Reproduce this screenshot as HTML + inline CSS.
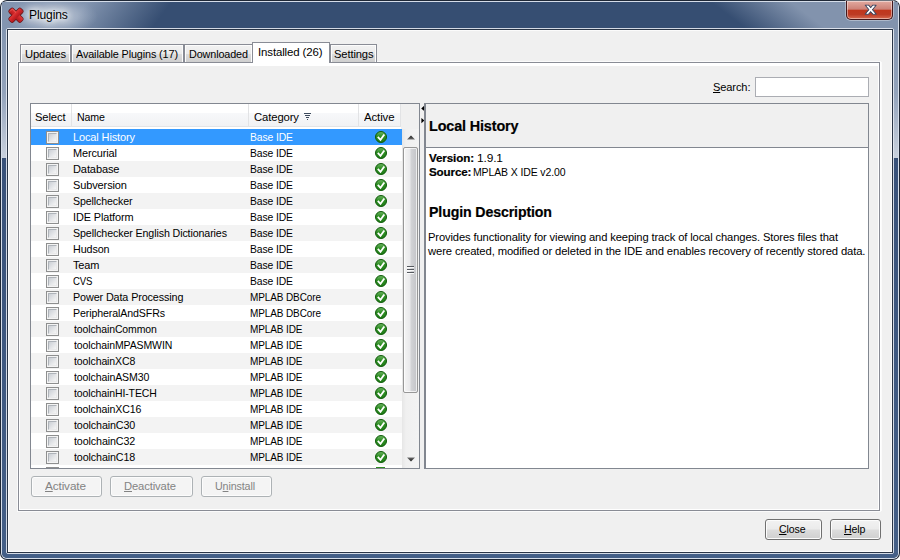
<!DOCTYPE html>
<html lang="en"><head><meta charset="utf-8"><title>Plugins</title>
<style>
html,body{margin:0;padding:0;}
body{width:900px;height:560px;overflow:hidden;position:relative;background:#fff;font-family:"Liberation Sans", "DejaVu Sans", sans-serif;font-size:11px;color:#000;}
.a{position:absolute;box-sizing:border-box;}
.t{position:absolute;white-space:nowrap;line-height:1;}
.b{font-weight:bold;font-family:"Liberation Sans", "DejaVu Sans", sans-serif;-webkit-text-stroke:0.2px #000;}
u{text-decoration:underline;text-underline-offset:1px;}
.btn{position:absolute;box-sizing:border-box;border:1px solid #707070;border-radius:3px;
 background:linear-gradient(#f2f2f2 0%,#ebebeb 48%,#dddddd 52%,#cfcfcf 100%);box-shadow:inset 0 0 0 1px #fcfcfc;}
.btn.dis{border-color:#adb2b5;background:#f4f4f4;box-shadow:inset 0 0 0 1px #fcfcfc;}
.tab{position:absolute;box-sizing:border-box;border:1px solid #898c95;border-bottom:none;
 background:linear-gradient(#f2f2f2 0%,#ebebeb 50%,#dddddd 52%,#cfcfcf 100%);box-shadow:inset 1px 1px 0 0 #fcfcfc, inset -1px 0 0 0 #fcfcfc;}
.cb{position:absolute;box-sizing:border-box;width:13px;height:13px;border:1px solid #8e8f8f;background:#f4f4f4;}
.cb i{position:absolute;left:1px;top:1px;width:9px;height:9px;box-sizing:border-box;border:1px solid #aeb3b9;border-right-color:#e9e9ea;border-bottom-color:#e9e9ea;background:linear-gradient(135deg,#cbcfd5 0%,#f6f6f6 100%);}
.hd{position:absolute;top:104px;height:23px;box-sizing:border-box;background:linear-gradient(#ffffff 0%,#ffffff 40%,#f7f8fa 42%,#f1f2f4 100%);border-bottom:1px solid #e3e4e6;border-right:1px solid #e2e3e5;}
</style></head><body>

<svg class="a" id="frame" style="left:0;top:0" width="900" height="560" viewBox="0 0 900 560"><defs><linearGradient id="gl" gradientUnits="userSpaceOnUse" x1="78" y1="15" x2="133" y2="55"><stop offset="0" stop-color="#8395b0"/><stop offset="1" stop-color="#8395b0" stop-opacity="0"/></linearGradient><linearGradient id="gr" gradientUnits="userSpaceOnUse" x1="728" y1="15" x2="757.5" y2="-23.6"><stop offset="0" stop-color="#8293ad" stop-opacity="0"/><stop offset="1" stop-color="#8293ad"/></linearGradient><linearGradient id="gs" gradientUnits="userSpaceOnUse" x1="0" y1="28" x2="0" y2="158"><stop offset="0" stop-color="#8395b0"/><stop offset=".5" stop-color="#93a3bb"/><stop offset="1" stop-color="#c9d1dd"/></linearGradient><linearGradient id="gd" gradientUnits="userSpaceOnUse" x1="0" y1="158" x2="0" y2="558"><stop offset="0" stop-color="#39527a"/><stop offset="1" stop-color="#445f87"/></linearGradient><radialGradient id="glow" gradientUnits="userSpaceOnUse" cx="52" cy="16" r="46" gradientTransform="translate(52 16) scale(1 .42) translate(-52 -16)"><stop offset="0" stop-color="#dfe5ee" stop-opacity=".75"/><stop offset=".55" stop-color="#c5cedb" stop-opacity=".45"/><stop offset="1" stop-color="#a9b5c8" stop-opacity="0"/></radialGradient><clipPath id="cpT"><rect x="2" y="2" width="896" height="27"/></clipPath></defs><rect x="0" y="0" width="900" height="560" rx="7" ry="7" fill="#1f2836"/><rect x="1" y="1" width="898" height="558" rx="6" ry="6" fill="#d5dde9"/><rect x="2" y="2" width="896" height="556" rx="5" ry="5" fill="#364e72"/><rect x="2" y="158" width="896" height="400" rx="5" ry="5" fill="url(#gd)"/><rect x="2" y="28" width="5" height="130" fill="url(#gs)"/><rect x="893" y="28" width="5" height="130" fill="url(#gs)"/><g clip-path="url(#cpT)"><rect x="2" y="2" width="896" height="27" rx="5" ry="5" fill="#364e72"/><rect x="2" y="2" width="400" height="27" fill="url(#gl)"/><rect x="500" y="2" width="398" height="27" fill="url(#gr)"/><rect x="2" y="2" width="200" height="27" fill="url(#glow)"/></g><rect x="6.5" y="28.5" width="887" height="525" rx="1.5" fill="none" stroke="#e4e9f1" stroke-opacity=".9"/><rect x="7.5" y="29.5" width="885" height="523" fill="none" stroke="#2a3546"/></svg>
<div class="a" id="client" style="left:8px;top:30px;width:884px;height:522px;background:#f0f0f0;box-shadow:inset 0 0 0 1px #fbfbfb;"></div>
<svg class="a" style="left:6px;top:5px" width="20" height="20" viewBox="0 0 20 20"><defs><linearGradient id="xg" x1="0" y1="0" x2="0" y2="1"><stop offset="0" stop-color="#e03a38"/><stop offset=".55" stop-color="#cc2226"/><stop offset="1" stop-color="#b01c1f"/></linearGradient></defs><g transform="translate(10 10.2)"><g stroke="#6a181b" stroke-width="1.5" fill="#6a181b" stroke-linejoin="round"><rect x="-8" y="-2.6" width="16" height="5.2" rx="1.4" transform="rotate(45)"/><rect x="-8" y="-2.6" width="16" height="5.2" rx="1.4" transform="rotate(-45)"/></g><g fill="url(#xg)"><rect x="-8" y="-2.6" width="16" height="5.2" rx="1.4" transform="rotate(45)"/><rect x="-8" y="-2.6" width="16" height="5.2" rx="1.4" transform="rotate(-45)"/></g><path d="M-6.2 -3.6 L-3.6 -6.2 L0 -2.6" fill="none" stroke="#f27a72" stroke-width="1" opacity=".6"/></g></svg>
<div class="a" style="left:846px;top:1px;width:47px;height:19px;border:1px solid #43171a;border-top:none;border-radius:0 0 5px 5px;background:linear-gradient(#e2aaa0 0%,#cd8176 46%,#c0361c 50%,#bd3b24 75%,#d66a50 100%);box-shadow:inset 0 0 0 1px rgba(255,255,255,.45),0 0 0 1px rgba(255,255,255,.35);"></div>
<svg class="a" style="left:864px;top:4px" width="14" height="12" viewBox="0 0 14 12"><path d="M1.3 1.2 H4.5 L6.7 3.7 L8.9 1.2 H12.1 L8.4 5.6 L12.1 10.2 H8.9 L6.7 7.6 L4.5 10.2 H1.3 L5 5.6 Z" fill="#fff" stroke="#3f4a63" stroke-width="1.1" stroke-linejoin="round"/><path d="M2.4 1.8 H4.2 L6.7 4.7 L9.2 1.8 H11 L7.6 5.7 L11 9.6 H9.2 L6.7 6.7 L4.2 9.6 H2.4 L5.8 5.7 Z" fill="#fff"/></svg>
<div class="a" style="left:18px;top:62px;width:862px;height:449px;border:1px solid #898c95;background:#f0f0f0;box-shadow:inset 0 0 0 1px #fff,0 0 0 1px rgba(255,255,255,.75),2px 0 0 0 rgba(255,255,255,.75);"></div>
<div class="a" style="left:19px;top:63px;width:860px;height:3px;background:#fff;"></div>
<div class="tab" style="left:20px;top:44px;width:51px;height:18px;"></div>
<div class="tab" style="left:71px;top:44px;width:113px;height:18px;"></div>
<div class="tab" style="left:184px;top:44px;width:69px;height:18px;"></div>
<div class="tab" style="left:330px;top:44px;width:47px;height:18px;"></div>
<div class="a" style="left:252px;top:42px;width:78px;height:21px;border:1px solid #898c95;border-bottom:none;background:#fff;"></div>
<div class="a" style="left:253px;top:62px;width:76px;height:2px;background:#fff;"></div>
<div class="a" style="left:755px;top:77px;width:114px;height:20px;border:1px solid #abadb3;border-top-color:#abadb3;background:#fff;"></div>
<div class="a" style="left:30px;top:103px;width:390px;height:366px;border:1px solid #828790;background:#fff;"></div>
<div class="hd" style="left:31px;width:41px;"></div>
<div class="hd" style="left:72px;width:177px;"></div>
<div class="hd" style="left:249px;width:110px;"></div>
<div class="hd" style="left:359px;width:42px;"></div>
<div class="a" style="left:401px;top:104px;width:18px;height:25px;background:#f0f0f0;"></div>
<svg class="a" style="left:304px;top:113px" width="7" height="8" viewBox="0 0 7 8"><path d="M0 .5H7M1 2.5H6M2 4.5H5M3 6.5H4" stroke="#3c4a5c" stroke-width="1" fill="none"/></svg>
<div class="a" style="left:31px;top:129px;width:371px;height:16px;background:#3399ff;"></div>
<div class="cb" style="left:46px;top:131px;"><i></i></div>
<svg class="a" style="left:375px;top:131px" width="12" height="12" viewBox="0 0 12 12"><defs><linearGradient id="g0" x1="0" y1="0" x2="0" y2="1"><stop offset="0" stop-color="#6db562"/><stop offset=".45" stop-color="#2f8f24"/><stop offset="1" stop-color="#1f7a16"/></linearGradient></defs><circle cx="6" cy="6" r="5.5" fill="url(#g0)" stroke="#0f5c0a" stroke-width="1"/><path d="M2.8 5.8 L5.5 8.8 L9.3 3.5" fill="none" stroke="#fff" stroke-width="1.8" stroke-linecap="butt" stroke-linejoin="miter"/></svg>
<div class="cb" style="left:46px;top:147px;"><i></i></div>
<svg class="a" style="left:375px;top:147px" width="12" height="12" viewBox="0 0 12 12"><defs><linearGradient id="g1" x1="0" y1="0" x2="0" y2="1"><stop offset="0" stop-color="#6db562"/><stop offset=".45" stop-color="#2f8f24"/><stop offset="1" stop-color="#1f7a16"/></linearGradient></defs><circle cx="6" cy="6" r="5.5" fill="url(#g1)" stroke="#0f5c0a" stroke-width="1"/><path d="M2.8 5.8 L5.5 8.8 L9.3 3.5" fill="none" stroke="#fff" stroke-width="1.8" stroke-linecap="butt" stroke-linejoin="miter"/></svg>
<div class="a" style="left:31px;top:161px;width:371px;height:16px;background:#f3f3f3;"></div>
<div class="cb" style="left:46px;top:163px;"><i></i></div>
<svg class="a" style="left:375px;top:163px" width="12" height="12" viewBox="0 0 12 12"><defs><linearGradient id="g2" x1="0" y1="0" x2="0" y2="1"><stop offset="0" stop-color="#6db562"/><stop offset=".45" stop-color="#2f8f24"/><stop offset="1" stop-color="#1f7a16"/></linearGradient></defs><circle cx="6" cy="6" r="5.5" fill="url(#g2)" stroke="#0f5c0a" stroke-width="1"/><path d="M2.8 5.8 L5.5 8.8 L9.3 3.5" fill="none" stroke="#fff" stroke-width="1.8" stroke-linecap="butt" stroke-linejoin="miter"/></svg>
<div class="cb" style="left:46px;top:179px;"><i></i></div>
<svg class="a" style="left:375px;top:179px" width="12" height="12" viewBox="0 0 12 12"><defs><linearGradient id="g3" x1="0" y1="0" x2="0" y2="1"><stop offset="0" stop-color="#6db562"/><stop offset=".45" stop-color="#2f8f24"/><stop offset="1" stop-color="#1f7a16"/></linearGradient></defs><circle cx="6" cy="6" r="5.5" fill="url(#g3)" stroke="#0f5c0a" stroke-width="1"/><path d="M2.8 5.8 L5.5 8.8 L9.3 3.5" fill="none" stroke="#fff" stroke-width="1.8" stroke-linecap="butt" stroke-linejoin="miter"/></svg>
<div class="a" style="left:31px;top:193px;width:371px;height:16px;background:#f3f3f3;"></div>
<div class="cb" style="left:46px;top:195px;"><i></i></div>
<svg class="a" style="left:375px;top:195px" width="12" height="12" viewBox="0 0 12 12"><defs><linearGradient id="g4" x1="0" y1="0" x2="0" y2="1"><stop offset="0" stop-color="#6db562"/><stop offset=".45" stop-color="#2f8f24"/><stop offset="1" stop-color="#1f7a16"/></linearGradient></defs><circle cx="6" cy="6" r="5.5" fill="url(#g4)" stroke="#0f5c0a" stroke-width="1"/><path d="M2.8 5.8 L5.5 8.8 L9.3 3.5" fill="none" stroke="#fff" stroke-width="1.8" stroke-linecap="butt" stroke-linejoin="miter"/></svg>
<div class="cb" style="left:46px;top:211px;"><i></i></div>
<svg class="a" style="left:375px;top:211px" width="12" height="12" viewBox="0 0 12 12"><defs><linearGradient id="g5" x1="0" y1="0" x2="0" y2="1"><stop offset="0" stop-color="#6db562"/><stop offset=".45" stop-color="#2f8f24"/><stop offset="1" stop-color="#1f7a16"/></linearGradient></defs><circle cx="6" cy="6" r="5.5" fill="url(#g5)" stroke="#0f5c0a" stroke-width="1"/><path d="M2.8 5.8 L5.5 8.8 L9.3 3.5" fill="none" stroke="#fff" stroke-width="1.8" stroke-linecap="butt" stroke-linejoin="miter"/></svg>
<div class="a" style="left:31px;top:225px;width:371px;height:16px;background:#f3f3f3;"></div>
<div class="cb" style="left:46px;top:227px;"><i></i></div>
<svg class="a" style="left:375px;top:227px" width="12" height="12" viewBox="0 0 12 12"><defs><linearGradient id="g6" x1="0" y1="0" x2="0" y2="1"><stop offset="0" stop-color="#6db562"/><stop offset=".45" stop-color="#2f8f24"/><stop offset="1" stop-color="#1f7a16"/></linearGradient></defs><circle cx="6" cy="6" r="5.5" fill="url(#g6)" stroke="#0f5c0a" stroke-width="1"/><path d="M2.8 5.8 L5.5 8.8 L9.3 3.5" fill="none" stroke="#fff" stroke-width="1.8" stroke-linecap="butt" stroke-linejoin="miter"/></svg>
<div class="cb" style="left:46px;top:243px;"><i></i></div>
<svg class="a" style="left:375px;top:243px" width="12" height="12" viewBox="0 0 12 12"><defs><linearGradient id="g7" x1="0" y1="0" x2="0" y2="1"><stop offset="0" stop-color="#6db562"/><stop offset=".45" stop-color="#2f8f24"/><stop offset="1" stop-color="#1f7a16"/></linearGradient></defs><circle cx="6" cy="6" r="5.5" fill="url(#g7)" stroke="#0f5c0a" stroke-width="1"/><path d="M2.8 5.8 L5.5 8.8 L9.3 3.5" fill="none" stroke="#fff" stroke-width="1.8" stroke-linecap="butt" stroke-linejoin="miter"/></svg>
<div class="a" style="left:31px;top:257px;width:371px;height:16px;background:#f3f3f3;"></div>
<div class="cb" style="left:46px;top:259px;"><i></i></div>
<svg class="a" style="left:375px;top:259px" width="12" height="12" viewBox="0 0 12 12"><defs><linearGradient id="g8" x1="0" y1="0" x2="0" y2="1"><stop offset="0" stop-color="#6db562"/><stop offset=".45" stop-color="#2f8f24"/><stop offset="1" stop-color="#1f7a16"/></linearGradient></defs><circle cx="6" cy="6" r="5.5" fill="url(#g8)" stroke="#0f5c0a" stroke-width="1"/><path d="M2.8 5.8 L5.5 8.8 L9.3 3.5" fill="none" stroke="#fff" stroke-width="1.8" stroke-linecap="butt" stroke-linejoin="miter"/></svg>
<div class="cb" style="left:46px;top:275px;"><i></i></div>
<svg class="a" style="left:375px;top:275px" width="12" height="12" viewBox="0 0 12 12"><defs><linearGradient id="g9" x1="0" y1="0" x2="0" y2="1"><stop offset="0" stop-color="#6db562"/><stop offset=".45" stop-color="#2f8f24"/><stop offset="1" stop-color="#1f7a16"/></linearGradient></defs><circle cx="6" cy="6" r="5.5" fill="url(#g9)" stroke="#0f5c0a" stroke-width="1"/><path d="M2.8 5.8 L5.5 8.8 L9.3 3.5" fill="none" stroke="#fff" stroke-width="1.8" stroke-linecap="butt" stroke-linejoin="miter"/></svg>
<div class="a" style="left:31px;top:289px;width:371px;height:16px;background:#f3f3f3;"></div>
<div class="cb" style="left:46px;top:291px;"><i></i></div>
<svg class="a" style="left:375px;top:291px" width="12" height="12" viewBox="0 0 12 12"><defs><linearGradient id="g10" x1="0" y1="0" x2="0" y2="1"><stop offset="0" stop-color="#6db562"/><stop offset=".45" stop-color="#2f8f24"/><stop offset="1" stop-color="#1f7a16"/></linearGradient></defs><circle cx="6" cy="6" r="5.5" fill="url(#g10)" stroke="#0f5c0a" stroke-width="1"/><path d="M2.8 5.8 L5.5 8.8 L9.3 3.5" fill="none" stroke="#fff" stroke-width="1.8" stroke-linecap="butt" stroke-linejoin="miter"/></svg>
<div class="cb" style="left:46px;top:307px;"><i></i></div>
<svg class="a" style="left:375px;top:307px" width="12" height="12" viewBox="0 0 12 12"><defs><linearGradient id="g11" x1="0" y1="0" x2="0" y2="1"><stop offset="0" stop-color="#6db562"/><stop offset=".45" stop-color="#2f8f24"/><stop offset="1" stop-color="#1f7a16"/></linearGradient></defs><circle cx="6" cy="6" r="5.5" fill="url(#g11)" stroke="#0f5c0a" stroke-width="1"/><path d="M2.8 5.8 L5.5 8.8 L9.3 3.5" fill="none" stroke="#fff" stroke-width="1.8" stroke-linecap="butt" stroke-linejoin="miter"/></svg>
<div class="a" style="left:31px;top:321px;width:371px;height:16px;background:#f3f3f3;"></div>
<div class="cb" style="left:46px;top:323px;"><i></i></div>
<svg class="a" style="left:375px;top:323px" width="12" height="12" viewBox="0 0 12 12"><defs><linearGradient id="g12" x1="0" y1="0" x2="0" y2="1"><stop offset="0" stop-color="#6db562"/><stop offset=".45" stop-color="#2f8f24"/><stop offset="1" stop-color="#1f7a16"/></linearGradient></defs><circle cx="6" cy="6" r="5.5" fill="url(#g12)" stroke="#0f5c0a" stroke-width="1"/><path d="M2.8 5.8 L5.5 8.8 L9.3 3.5" fill="none" stroke="#fff" stroke-width="1.8" stroke-linecap="butt" stroke-linejoin="miter"/></svg>
<div class="cb" style="left:46px;top:339px;"><i></i></div>
<svg class="a" style="left:375px;top:339px" width="12" height="12" viewBox="0 0 12 12"><defs><linearGradient id="g13" x1="0" y1="0" x2="0" y2="1"><stop offset="0" stop-color="#6db562"/><stop offset=".45" stop-color="#2f8f24"/><stop offset="1" stop-color="#1f7a16"/></linearGradient></defs><circle cx="6" cy="6" r="5.5" fill="url(#g13)" stroke="#0f5c0a" stroke-width="1"/><path d="M2.8 5.8 L5.5 8.8 L9.3 3.5" fill="none" stroke="#fff" stroke-width="1.8" stroke-linecap="butt" stroke-linejoin="miter"/></svg>
<div class="a" style="left:31px;top:353px;width:371px;height:16px;background:#f3f3f3;"></div>
<div class="cb" style="left:46px;top:355px;"><i></i></div>
<svg class="a" style="left:375px;top:355px" width="12" height="12" viewBox="0 0 12 12"><defs><linearGradient id="g14" x1="0" y1="0" x2="0" y2="1"><stop offset="0" stop-color="#6db562"/><stop offset=".45" stop-color="#2f8f24"/><stop offset="1" stop-color="#1f7a16"/></linearGradient></defs><circle cx="6" cy="6" r="5.5" fill="url(#g14)" stroke="#0f5c0a" stroke-width="1"/><path d="M2.8 5.8 L5.5 8.8 L9.3 3.5" fill="none" stroke="#fff" stroke-width="1.8" stroke-linecap="butt" stroke-linejoin="miter"/></svg>
<div class="cb" style="left:46px;top:371px;"><i></i></div>
<svg class="a" style="left:375px;top:371px" width="12" height="12" viewBox="0 0 12 12"><defs><linearGradient id="g15" x1="0" y1="0" x2="0" y2="1"><stop offset="0" stop-color="#6db562"/><stop offset=".45" stop-color="#2f8f24"/><stop offset="1" stop-color="#1f7a16"/></linearGradient></defs><circle cx="6" cy="6" r="5.5" fill="url(#g15)" stroke="#0f5c0a" stroke-width="1"/><path d="M2.8 5.8 L5.5 8.8 L9.3 3.5" fill="none" stroke="#fff" stroke-width="1.8" stroke-linecap="butt" stroke-linejoin="miter"/></svg>
<div class="a" style="left:31px;top:385px;width:371px;height:16px;background:#f3f3f3;"></div>
<div class="cb" style="left:46px;top:387px;"><i></i></div>
<svg class="a" style="left:375px;top:387px" width="12" height="12" viewBox="0 0 12 12"><defs><linearGradient id="g16" x1="0" y1="0" x2="0" y2="1"><stop offset="0" stop-color="#6db562"/><stop offset=".45" stop-color="#2f8f24"/><stop offset="1" stop-color="#1f7a16"/></linearGradient></defs><circle cx="6" cy="6" r="5.5" fill="url(#g16)" stroke="#0f5c0a" stroke-width="1"/><path d="M2.8 5.8 L5.5 8.8 L9.3 3.5" fill="none" stroke="#fff" stroke-width="1.8" stroke-linecap="butt" stroke-linejoin="miter"/></svg>
<div class="cb" style="left:46px;top:403px;"><i></i></div>
<svg class="a" style="left:375px;top:403px" width="12" height="12" viewBox="0 0 12 12"><defs><linearGradient id="g17" x1="0" y1="0" x2="0" y2="1"><stop offset="0" stop-color="#6db562"/><stop offset=".45" stop-color="#2f8f24"/><stop offset="1" stop-color="#1f7a16"/></linearGradient></defs><circle cx="6" cy="6" r="5.5" fill="url(#g17)" stroke="#0f5c0a" stroke-width="1"/><path d="M2.8 5.8 L5.5 8.8 L9.3 3.5" fill="none" stroke="#fff" stroke-width="1.8" stroke-linecap="butt" stroke-linejoin="miter"/></svg>
<div class="a" style="left:31px;top:417px;width:371px;height:16px;background:#f3f3f3;"></div>
<div class="cb" style="left:46px;top:419px;"><i></i></div>
<svg class="a" style="left:375px;top:419px" width="12" height="12" viewBox="0 0 12 12"><defs><linearGradient id="g18" x1="0" y1="0" x2="0" y2="1"><stop offset="0" stop-color="#6db562"/><stop offset=".45" stop-color="#2f8f24"/><stop offset="1" stop-color="#1f7a16"/></linearGradient></defs><circle cx="6" cy="6" r="5.5" fill="url(#g18)" stroke="#0f5c0a" stroke-width="1"/><path d="M2.8 5.8 L5.5 8.8 L9.3 3.5" fill="none" stroke="#fff" stroke-width="1.8" stroke-linecap="butt" stroke-linejoin="miter"/></svg>
<div class="cb" style="left:46px;top:435px;"><i></i></div>
<svg class="a" style="left:375px;top:435px" width="12" height="12" viewBox="0 0 12 12"><defs><linearGradient id="g19" x1="0" y1="0" x2="0" y2="1"><stop offset="0" stop-color="#6db562"/><stop offset=".45" stop-color="#2f8f24"/><stop offset="1" stop-color="#1f7a16"/></linearGradient></defs><circle cx="6" cy="6" r="5.5" fill="url(#g19)" stroke="#0f5c0a" stroke-width="1"/><path d="M2.8 5.8 L5.5 8.8 L9.3 3.5" fill="none" stroke="#fff" stroke-width="1.8" stroke-linecap="butt" stroke-linejoin="miter"/></svg>
<div class="a" style="left:31px;top:449px;width:371px;height:16px;background:#f3f3f3;"></div>
<div class="cb" style="left:46px;top:451px;"><i></i></div>
<svg class="a" style="left:375px;top:451px" width="12" height="12" viewBox="0 0 12 12"><defs><linearGradient id="g20" x1="0" y1="0" x2="0" y2="1"><stop offset="0" stop-color="#6db562"/><stop offset=".45" stop-color="#2f8f24"/><stop offset="1" stop-color="#1f7a16"/></linearGradient></defs><circle cx="6" cy="6" r="5.5" fill="url(#g20)" stroke="#0f5c0a" stroke-width="1"/><path d="M2.8 5.8 L5.5 8.8 L9.3 3.5" fill="none" stroke="#fff" stroke-width="1.8" stroke-linecap="butt" stroke-linejoin="miter"/></svg>
<div class="a" style="left:46px;top:467px;width:13px;height:1px;background:#8e8f8f;"></div>
<div class="a" style="left:376px;top:467px;width:9px;height:1px;background:#2f8a22;"></div>
<div class="a" style="left:402px;top:129px;width:17px;height:339px;background:linear-gradient(90deg,#e6e6e6 0,#f0f0f0 4px,#f3f3f3 100%);"></div>
<div class="a" style="left:403px;top:147px;width:15px;height:246px;border:1px solid #979797;border-radius:2px;background:linear-gradient(90deg,#f5f5f5 0%,#e9e9eb 45%,#d2d3d6 55%,#c3c4c8 100%);box-shadow:inset 0 0 0 1px rgba(255,255,255,.7);"></div>
<svg class="a" style="left:407px;top:266px" width="7" height="8" viewBox="0 0 7 8"><path d="M0 .5H7M0 3.5H7M0 6.5H7" stroke="#55595f" stroke-width="1"/><path d="M0 1.5H7M0 4.5H7M0 7.5H7" stroke="#fff" stroke-width="1" opacity=".85"/></svg>
<svg class="a" style="left:407px;top:135px" width="8" height="5" viewBox="0 0 8 5"><defs><linearGradient id="ua" x1="0" y1="0" x2="0" y2="1"><stop offset="0" stop-color="#1a1a1a"/><stop offset="1" stop-color="#6e6e6e"/></linearGradient></defs><path d="M0 4.5 L4 .5 L8 4.5 Z" fill="url(#ua)"/></svg>
<svg class="a" style="left:407px;top:457px" width="8" height="5" viewBox="0 0 8 5"><defs><linearGradient id="da" x1="0" y1="0" x2="0" y2="1"><stop offset="0" stop-color="#6e6e6e"/><stop offset="1" stop-color="#1a1a1a"/></linearGradient></defs><path d="M0 .5 L4 4.5 L8 .5 Z" fill="url(#da)"/></svg>
<svg class="a" style="left:420px;top:104px" width="5" height="22" viewBox="0 0 5 22"><path d="M4.2 1.8 L4.2 7 L1.2 4.4 Z M1.4 14 L1.4 19.2 L4.4 16.6 Z" fill="#000"/></svg>
<div class="a" style="left:424px;top:103px;width:445px;height:366px;border:1px solid #828790;border-left:2px solid #828790;background:#fff;"></div>
<div class="a" style="left:426px;top:104px;width:442px;height:43px;background:#f0f0f0;border-bottom:1px solid #828790;box-sizing:content-box;"></div>
<div class="btn dis" style="left:31px;top:476px;width:71px;height:21px;"></div>
<div class="btn dis" style="left:110px;top:476px;width:83px;height:21px;"></div>
<div class="btn dis" style="left:201px;top:476px;width:71px;height:21px;"></div>
<div class="btn" style="left:765px;top:519px;width:57px;height:21px;"></div>
<div class="btn" style="left:830px;top:519px;width:51px;height:21px;"></div>
<span class="t" id="title" style="left:28.60px;top:8.84px;font-size:12px;color:#000;letter-spacing:-0.120px;transform:scaleX(1.0067);transform-origin:0 0;text-shadow:0 0 6px #fff,0 0 8px #fff,0 0 10px rgba(255,255,255,.9);">Plugins</span>
<span class="t" id="tab_Updates" style="left:24.50px;top:48.69px;font-size:11px;color:#000;letter-spacing:-0.120px;transform:scaleX(1.0183);transform-origin:0 0;">Updates</span>
<span class="t" id="tab_Available" style="left:76.00px;top:48.69px;font-size:11px;color:#000;letter-spacing:-0.120px;transform:scaleX(0.9838);transform-origin:0 0;">Available Plugins (17)</span>
<span class="t" id="tab_Downloaded" style="left:188.50px;top:48.69px;font-size:11px;color:#000;letter-spacing:-0.120px;transform:scaleX(0.9821);transform-origin:0 0;">Downloaded</span>
<span class="t" id="tab_Settings" style="left:333.50px;top:48.69px;font-size:11px;color:#000;letter-spacing:-0.120px;transform:scaleX(1.0152);transform-origin:0 0;">Settings</span>
<span class="t" id="tab_Installed" style="left:257.50px;top:46.69px;font-size:11px;color:#000;letter-spacing:-0.120px;transform:scaleX(1.0398);transform-origin:0 0;">Installed (26)</span>
<span class="t" id="search" style="left:713.40px;top:81.69px;font-size:11px;color:#000;letter-spacing:-0.120px;transform:scaleX(1.0080);transform-origin:0 0;"><u>S</u>earch:</span>
<span class="t" id="h_select" style="left:34.50px;top:111.69px;font-size:11px;color:#000;letter-spacing:-0.120px;transform:scaleX(1.0174);transform-origin:0 0;">Select</span>
<span class="t" id="h_name" style="left:77.20px;top:111.69px;font-size:11px;color:#000;letter-spacing:-0.120px;transform:scaleX(0.9661);transform-origin:0 0;">Name</span>
<span class="t" id="h_cat" style="left:253.50px;top:111.69px;font-size:11px;color:#000;letter-spacing:-0.120px;transform:scaleX(1.0274);transform-origin:0 0;">Category</span>
<span class="t" id="h_active" style="left:363.50px;top:111.69px;font-size:11px;color:#000;letter-spacing:-0.120px;transform:scaleX(1.0385);transform-origin:0 0;">Active</span>
<span class="t" id="n0" style="left:72.60px;top:131.69px;font-size:11px;color:#fff;letter-spacing:-0.120px;transform:scaleX(0.9978);transform-origin:0 0;">Local History</span>
<span class="t" id="c0" style="left:249.70px;top:131.69px;font-size:11px;color:#fff;letter-spacing:-0.120px;transform:scaleX(0.9424);transform-origin:0 0;">Base IDE</span>
<span class="t" id="n1" style="left:72.60px;top:147.69px;font-size:11px;color:#000;letter-spacing:-0.120px;transform:scaleX(0.9938);transform-origin:0 0;">Mercurial</span>
<span class="t" id="c1" style="left:249.70px;top:147.69px;font-size:11px;color:#000;letter-spacing:-0.120px;transform:scaleX(0.9424);transform-origin:0 0;">Base IDE</span>
<span class="t" id="n2" style="left:72.60px;top:163.69px;font-size:11px;color:#000;letter-spacing:-0.120px;transform:scaleX(1.0053);transform-origin:0 0;">Database</span>
<span class="t" id="c2" style="left:249.70px;top:163.69px;font-size:11px;color:#000;letter-spacing:-0.120px;transform:scaleX(0.9424);transform-origin:0 0;">Base IDE</span>
<span class="t" id="n3" style="left:72.60px;top:179.69px;font-size:11px;color:#000;letter-spacing:-0.120px;transform:scaleX(1.0006);transform-origin:0 0;">Subversion</span>
<span class="t" id="c3" style="left:249.70px;top:179.69px;font-size:11px;color:#000;letter-spacing:-0.120px;transform:scaleX(0.9424);transform-origin:0 0;">Base IDE</span>
<span class="t" id="n4" style="left:72.60px;top:195.69px;font-size:11px;color:#000;letter-spacing:-0.120px;transform:scaleX(0.9649);transform-origin:0 0;">Spellchecker</span>
<span class="t" id="c4" style="left:249.70px;top:195.69px;font-size:11px;color:#000;letter-spacing:-0.120px;transform:scaleX(0.9424);transform-origin:0 0;">Base IDE</span>
<span class="t" id="n5" style="left:72.60px;top:211.69px;font-size:11px;color:#000;letter-spacing:-0.120px;transform:scaleX(0.9912);transform-origin:0 0;">IDE Platform</span>
<span class="t" id="c5" style="left:249.70px;top:211.69px;font-size:11px;color:#000;letter-spacing:-0.120px;transform:scaleX(0.9424);transform-origin:0 0;">Base IDE</span>
<span class="t" id="n6" style="left:72.60px;top:227.69px;font-size:11px;color:#000;letter-spacing:-0.120px;transform:scaleX(0.9698);transform-origin:0 0;">Spellchecker English Dictionaries</span>
<span class="t" id="c6" style="left:249.70px;top:227.69px;font-size:11px;color:#000;letter-spacing:-0.120px;transform:scaleX(0.9424);transform-origin:0 0;">Base IDE</span>
<span class="t" id="n7" style="left:72.60px;top:243.69px;font-size:11px;color:#000;letter-spacing:-0.120px;transform:scaleX(0.9780);transform-origin:0 0;">Hudson</span>
<span class="t" id="c7" style="left:249.70px;top:243.69px;font-size:11px;color:#000;letter-spacing:-0.120px;transform:scaleX(0.9424);transform-origin:0 0;">Base IDE</span>
<span class="t" id="n8" style="left:72.60px;top:259.69px;font-size:11px;color:#000;letter-spacing:-0.120px;transform:scaleX(0.9983);transform-origin:0 0;">Team</span>
<span class="t" id="c8" style="left:249.70px;top:259.69px;font-size:11px;color:#000;letter-spacing:-0.120px;transform:scaleX(0.9424);transform-origin:0 0;">Base IDE</span>
<span class="t" id="n9" style="left:72.60px;top:275.69px;font-size:11px;color:#000;letter-spacing:-0.120px;transform:scaleX(0.8711);transform-origin:0 0;">CVS</span>
<span class="t" id="c9" style="left:249.70px;top:275.69px;font-size:11px;color:#000;letter-spacing:-0.120px;transform:scaleX(0.9424);transform-origin:0 0;">Base IDE</span>
<span class="t" id="n10" style="left:72.60px;top:291.69px;font-size:11px;color:#000;letter-spacing:-0.120px;transform:scaleX(0.9818);transform-origin:0 0;">Power Data Processing</span>
<span class="t" id="c10" style="left:249.70px;top:291.69px;font-size:11px;color:#000;letter-spacing:-0.120px;transform:scaleX(0.9083);transform-origin:0 0;">MPLAB DBCore</span>
<span class="t" id="n11" style="left:72.60px;top:307.69px;font-size:11px;color:#000;letter-spacing:-0.120px;transform:scaleX(0.9654);transform-origin:0 0;">PeripheralAndSFRs</span>
<span class="t" id="c11" style="left:249.70px;top:307.69px;font-size:11px;color:#000;letter-spacing:-0.120px;transform:scaleX(0.9083);transform-origin:0 0;">MPLAB DBCore</span>
<span class="t" id="n12" style="left:73.80px;top:323.69px;font-size:11px;color:#000;letter-spacing:-0.120px;transform:scaleX(0.9520);transform-origin:0 0;">toolchainCommon</span>
<span class="t" id="c12" style="left:249.70px;top:323.69px;font-size:11px;color:#000;letter-spacing:-0.120px;transform:scaleX(0.9094);transform-origin:0 0;">MPLAB IDE</span>
<span class="t" id="n13" style="left:73.80px;top:339.69px;font-size:11px;color:#000;letter-spacing:-0.120px;transform:scaleX(0.9542);transform-origin:0 0;">toolchainMPASMWIN</span>
<span class="t" id="c13" style="left:249.70px;top:339.69px;font-size:11px;color:#000;letter-spacing:-0.120px;transform:scaleX(0.9094);transform-origin:0 0;">MPLAB IDE</span>
<span class="t" id="n14" style="left:73.80px;top:355.69px;font-size:11px;color:#000;letter-spacing:-0.120px;transform:scaleX(0.9561);transform-origin:0 0;">toolchainXC8</span>
<span class="t" id="c14" style="left:249.70px;top:355.69px;font-size:11px;color:#000;letter-spacing:-0.120px;transform:scaleX(0.9094);transform-origin:0 0;">MPLAB IDE</span>
<span class="t" id="n15" style="left:73.80px;top:371.69px;font-size:11px;color:#000;letter-spacing:-0.120px;transform:scaleX(0.9586);transform-origin:0 0;">toolchainASM30</span>
<span class="t" id="c15" style="left:249.70px;top:371.69px;font-size:11px;color:#000;letter-spacing:-0.120px;transform:scaleX(0.9094);transform-origin:0 0;">MPLAB IDE</span>
<span class="t" id="n16" style="left:73.80px;top:387.69px;font-size:11px;color:#000;letter-spacing:-0.120px;transform:scaleX(0.9535);transform-origin:0 0;">toolchainHI-TECH</span>
<span class="t" id="c16" style="left:249.70px;top:387.69px;font-size:11px;color:#000;letter-spacing:-0.120px;transform:scaleX(0.9094);transform-origin:0 0;">MPLAB IDE</span>
<span class="t" id="n17" style="left:73.80px;top:403.69px;font-size:11px;color:#000;letter-spacing:-0.120px;transform:scaleX(0.9597);transform-origin:0 0;">toolchainXC16</span>
<span class="t" id="c17" style="left:249.70px;top:403.69px;font-size:11px;color:#000;letter-spacing:-0.120px;transform:scaleX(0.9094);transform-origin:0 0;">MPLAB IDE</span>
<span class="t" id="n18" style="left:73.80px;top:419.69px;font-size:11px;color:#000;letter-spacing:-0.120px;transform:scaleX(0.9746);transform-origin:0 0;">toolchainC30</span>
<span class="t" id="c18" style="left:249.70px;top:419.69px;font-size:11px;color:#000;letter-spacing:-0.120px;transform:scaleX(0.9094);transform-origin:0 0;">MPLAB IDE</span>
<span class="t" id="n19" style="left:73.80px;top:435.69px;font-size:11px;color:#000;letter-spacing:-0.120px;transform:scaleX(0.9746);transform-origin:0 0;">toolchainC32</span>
<span class="t" id="c19" style="left:249.70px;top:435.69px;font-size:11px;color:#000;letter-spacing:-0.120px;transform:scaleX(0.9094);transform-origin:0 0;">MPLAB IDE</span>
<span class="t" id="n20" style="left:73.80px;top:451.69px;font-size:11px;color:#000;letter-spacing:-0.120px;transform:scaleX(0.9746);transform-origin:0 0;">toolchainC18</span>
<span class="t" id="c20" style="left:249.70px;top:451.69px;font-size:11px;color:#000;letter-spacing:-0.120px;transform:scaleX(0.9094);transform-origin:0 0;">MPLAB IDE</span>
<span class="t b" id="d_title" style="left:429.20px;top:119.15px;font-size:14px;color:#000;letter-spacing:-0.120px;transform:scaleX(1.0256);transform-origin:0 0;">Local History</span>
<span class="t b" id="d_ver_l" style="left:428.90px;top:152.69px;font-size:11px;color:#000;letter-spacing:-0.120px;transform:scaleX(1.0572);transform-origin:0 0;">Version:</span>
<span class="t" id="d_ver" style="left:476.50px;top:152.69px;font-size:11px;color:#000;letter-spacing:-0.120px;transform:scaleX(1.0838);transform-origin:0 0;">1.9.1</span>
<span class="t b" id="d_src_l" style="left:428.90px;top:166.69px;font-size:11px;color:#000;letter-spacing:-0.120px;transform:scaleX(1.0559);transform-origin:0 0;">Source:</span>
<span class="t" id="d_src" style="left:472.70px;top:166.69px;font-size:11px;color:#000;letter-spacing:-0.120px;transform:scaleX(0.9524);transform-origin:0 0;">MPLAB X IDE v2.00</span>
<span class="t b" id="d_pd" style="left:429.40px;top:205.15px;font-size:14px;color:#000;letter-spacing:-0.120px;transform:scaleX(1.0111);transform-origin:0 0;">Plugin Description</span>
<span class="t" id="d_l1" style="left:427.50px;top:231.69px;font-size:11px;color:#000;letter-spacing:-0.120px;transform:scaleX(1.0161);transform-origin:0 0;">Provides functionality for viewing and keeping track of local changes. Stores files that</span>
<span class="t" id="d_l2" style="left:427.50px;top:245.69px;font-size:11px;color:#000;letter-spacing:-0.120px;transform:scaleX(1.0243);transform-origin:0 0;">were created, modified or deleted in the IDE and enables recovery of recently stored data.</span>
<span class="t" id="b_act" style="left:44.60px;top:480.69px;font-size:11px;color:#838383;letter-spacing:-0.120px;transform:scaleX(1.0705);transform-origin:0 0;"><u>A</u>ctivate</span>
<span class="t" id="b_deact" style="left:123.50px;top:480.69px;font-size:11px;color:#838383;letter-spacing:-0.120px;transform:scaleX(1.0215);transform-origin:0 0;"><u>D</u>eactivate</span>
<span class="t" id="b_unin" style="left:214.50px;top:480.69px;font-size:11px;color:#838383;letter-spacing:-0.120px;transform:scaleX(0.9723);transform-origin:0 0;">U<u>n</u>install</span>
<span class="t" id="b_close" style="left:779.00px;top:523.69px;font-size:11px;color:#000;letter-spacing:-0.120px;transform:scaleX(0.9580);transform-origin:0 0;"><u>C</u>lose</span>
<span class="t" id="b_help" style="left:844.00px;top:523.69px;font-size:11px;color:#000;letter-spacing:-0.120px;transform:scaleX(0.9650);transform-origin:0 0;"><u>H</u>elp</span>
</body></html>
